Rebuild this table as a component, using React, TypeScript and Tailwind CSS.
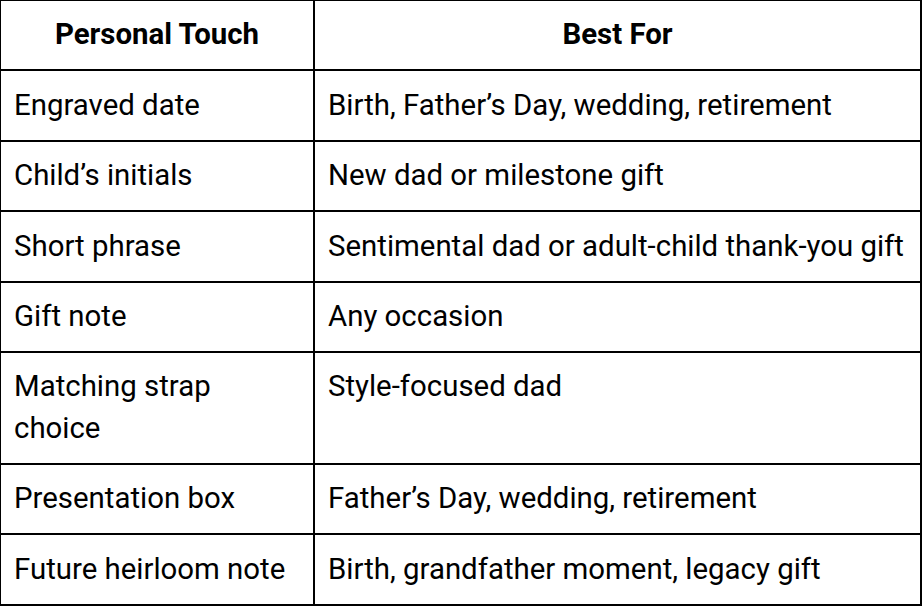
import React from "react";

const rows: [string, string][] = [
  ["Engraved date", "Birth, Father’s Day, wedding, retirement"],
  ["Child’s initials", "New dad or milestone gift"],
  ["Short phrase", "Sentimental dad or adult-child thank-you gift"],
  ["Gift note", "Any occasion"],
  ["Matching strap choice", "Style-focused dad"],
  ["Presentation box", "Father’s Day, wedding, retirement"],
  ["Future heirloom note", "Birth, grandfather moment, legacy gift"],
];

export default function App() {
  return (
    <div
      className="w-[922px] h-[606px] bg-white text-black overflow-hidden"
      style={{ fontFamily: "Roboto, 'Liberation Sans', sans-serif" }}
    >
      <div className="border-t border-l border-black text-[29.4px] leading-[41.6px]">
        <div className="grid grid-cols-[314px_607px]">
          <div className="border-r-2 border-b-2 border-black px-[13px] py-[13.4px] font-bold text-center">
            Personal Touch
          </div>
          <div className="border-r-2 border-b-2 border-black px-[13px] py-[13.4px] font-bold text-center">
            Best For
          </div>
          {rows.map(([a, b]) => (
            <React.Fragment key={a}>
              <div className="border-r-2 border-b-2 border-black px-[13px] py-[13.4px]">
                {a}
              </div>
              <div className="border-r-2 border-b-2 border-black px-[13px] py-[13.4px]">
                {b}
              </div>
            </React.Fragment>
          ))}
        </div>
      </div>
    </div>
  );
}
